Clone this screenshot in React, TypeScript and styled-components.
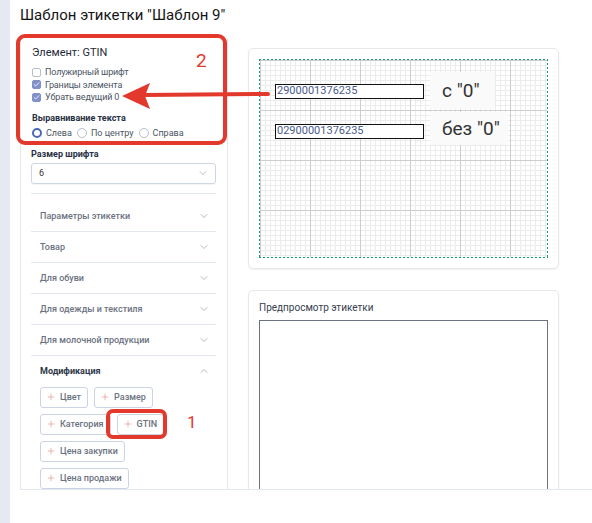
import React from 'react'
import styled, { createGlobalStyle } from 'styled-components'
import { ChevronDown, ChevronUp, Plus, Check } from 'lucide-react'

const GlobalStyle = createGlobalStyle`
  html, body {
    margin: 0;
    padding: 0;
    background: #fff;
  }
  body {
    font-family: Roboto, "Liberation Sans", sans-serif;
    color: #1f2937;
  }
`

const Page = styled.div`
  position: relative;
  display: flex;
  width: 592px;
  height: 523px;
  overflow: hidden;
  background: #fff;
`

const Strip = styled.div`
  width: 10px;
  flex: none;
  background: #e5e9f2;
`

const Main = styled.div`
  flex: 1;
  display: flex;
  flex-direction: column;
  min-width: 0;
`

const Content = styled.div`
  height: 490px;
  overflow: hidden;
  padding-left: 10px;
`

const Title = styled.h1`
  margin: 0;
  padding-top: 5px;
  height: 25px;
  font-size: 15px;
  line-height: 20px;
  font-weight: 400;
  color: #151515;
`

const Columns = styled.div`
  display: grid;
  grid-template-columns: 208px 311px;
  column-gap: 20px;
  margin-top: 8px;
  align-items: start;
`

const Panel = styled.aside`
  border-left: 1px solid #e4e7ec;
  border-right: 1px solid #e4e7ec;
  padding: 0 11px 20px 10px;
  min-height: 460px;
`

const ElementSection = styled.section`
  padding: 8px 0 0 1px;
`

const ElementTitle = styled.div`
  font-size: 11px;
  line-height: 14px;
  color: #1f2937;
`

const CheckList = styled.div`
  margin-top: 6px;
  display: flex;
  flex-direction: column;
`

const CheckRow = styled.label`
  display: flex;
  align-items: center;
  gap: 4px;
  height: 12.5px;
  font-size: 9px;
  letter-spacing: -0.15px;
  color: #4b5563;
`

const Box = styled.span<{ $checked?: boolean }>`
  width: 9px;
  height: 9px;
  box-sizing: border-box;
  border-radius: 2px;
  border: 1px solid ${p => (p.$checked ? '#8190c8' : '#b8bfcc')};
  background: ${p => (p.$checked ? '#8190c8' : '#fff')};
  display: flex;
  align-items: center;
  justify-content: center;
  color: #fff;
`

const SubTitle = styled.div<{ $mt: number }>`
  margin-top: ${p => p.$mt}px;
  font-size: 9px;
  line-height: 12px;
  font-weight: 700;
  color: #273043;
`

const RadioRow = styled.div`
  margin-top: 3px;
  display: flex;
  align-items: center;
  height: 12px;
  gap: 5px;
`

const RadioItem = styled.label`
  display: flex;
  align-items: center;
  gap: 4px;
  font-size: 9px;
  color: #4b5563;
`

const Radio = styled.span<{ $on?: boolean }>`
  width: 10px;
  height: 10px;
  box-sizing: border-box;
  border-radius: 50%;
  border: ${p => (p.$on ? '2.5px solid #4a68b8' : '1px solid #b8bfcc')};
  background: #fff;
`

const Select = styled.div`
  margin-top: 3px;
  height: 21px;
  box-sizing: border-box;
  border: 1px solid #cfd6e3;
  border-radius: 3px;
  display: flex;
  align-items: center;
  justify-content: space-between;
  padding: 0 6px 0 7px;
  font-size: 9px;
  color: #333;
  box-shadow: 0 1px 1px rgba(0, 0, 0, 0.05);
  svg {
    color: #a3aab8;
  }
`

const Divider = styled.hr`
  margin: 9px 0 0;
  border: none;
  border-top: 1px solid #e2e6ee;
`

const Accordion = styled.div`
  margin-top: 7px;
`

const AccItem = styled.div<{ $last?: boolean }>`
  height: 30px;
  display: flex;
  align-items: center;
  justify-content: space-between;
  padding: 0 6px 0 9px;
  border-bottom: ${p => (p.$last ? 'none' : '1px solid #e2e6ee')};
  font-size: 9px;
  color: ${p => (p.$last ? '#2d3648' : '#6b7280')};
  font-weight: ${p => (p.$last ? 700 : 500)};
  svg {
    color: #9aa1ae;
  }
`

const Chips = styled.div`
  margin-top: 1px;
  padding-left: 9px;
  display: flex;
  flex-wrap: wrap;
  gap: 6px;
  width: 130px;
`

const Chip = styled.button`
  height: 21px;
  box-sizing: border-box;
  display: flex;
  align-items: center;
  gap: 4px;
  padding: 0 6px 0 5px;
  border: 1px solid #ccd3e4;
  border-radius: 3px;
  background: #fff;
  font-family: inherit;
  font-size: 9px;
  font-weight: 500;
  color: #6b7280;
  white-space: nowrap;
  svg {
    color: #e58a8a;
  }
`

const Right = styled.div`
  display: flex;
  flex-direction: column;
  padding-top: 10px;
`

const Card = styled.div`
  border: 1px solid #e6e8ec;
  border-radius: 5px;
  padding: 10px;
  background: #fff;
  box-shadow: 0 1px 2px rgba(0, 0, 0, 0.06);
  & + & {
    margin-top: 21px;
  }
`

const CanvasFrame = styled.div`
  padding: 1px;
  background-image: linear-gradient(to right, #10a06c 50%, transparent 50%),
    linear-gradient(to right, #10a06c 50%, transparent 50%),
    linear-gradient(to bottom, #10a06c 50%, transparent 50%),
    linear-gradient(to bottom, #10a06c 50%, transparent 50%);
  background-size: 4px 1px, 4px 1px, 1px 4px, 1px 4px;
  background-position: 0 0, 0 100%, 0 0, 100% 0;
  background-repeat: repeat-x, repeat-x, repeat-y, repeat-y;
`

const Canvas = styled.div`
  position: relative;
  height: 197px;
  background-color: #fff;
  background-image: linear-gradient(to right, #cdcdcd 1px, transparent 1px),
    linear-gradient(to bottom, #cdcdcd 1px, transparent 1px),
    linear-gradient(to right, #ececec 1px, transparent 1px),
    linear-gradient(to bottom, #ececec 1px, transparent 1px);
  background-size: 50px 50px, 50px 50px, 5px 5px, 5px 5px;
  background-position: 0 0;
`

const Field = styled.div<{ $top: number }>`
  position: absolute;
  left: 15px;
  top: ${p => p.$top}px;
  width: 149px;
  height: 15px;
  box-sizing: border-box;
  border: 1.5px solid #111;
  background: #fff;
  padding-left: 1px;
  font-size: 11px;
  line-height: 12px;
  color: #4a5a8c;
`

const Note = styled.div<{ $top: number; $w: number; $h: number }>`
  position: absolute;
  left: 170px;
  top: ${p => p.$top}px;
  width: ${p => p.$w}px;
  height: ${p => p.$h}px;
  box-sizing: border-box;
  background: #fafafa;
  padding-left: 12px;
  display: flex;
  align-items: center;
  font-size: 19px;
  color: #333;
`

const PreviewTitle = styled.div`
  font-size: 10px;
  line-height: 14px;
  color: #374151;
`

const PreviewBox = styled.div`
  margin-top: 5px;
  height: 240px;
  border: 1.5px solid #6b7180;
`

const Footer = styled.footer`
  height: 33px;
  margin-left: 10px;
  border-top: 1px solid #e3e7ee;
  background: #fff;
`

const RedFrame = styled.div<{ $l: number; $t: number; $w: number; $h: number; $r: number }>`
  position: absolute;
  left: ${p => p.$l}px;
  top: ${p => p.$t}px;
  width: ${p => p.$w}px;
  height: ${p => p.$h}px;
  box-sizing: border-box;
  border: 4px solid #e3392d;
  border-radius: ${p => p.$r}px;
  pointer-events: none;
`

const RedNum = styled.span<{ $l: number; $t: number; $s: number }>`
  position: absolute;
  left: ${p => p.$l}px;
  top: ${p => p.$t}px;
  font-size: ${p => p.$s}px;
  line-height: 1;
  color: #e3392d;
`

const ArrowSvg = styled.svg`
  position: absolute;
  left: 118px;
  top: 78px;
`

const checks = [
  { label: 'Полужирный шрифт', on: false },
  { label: 'Границы элемента', on: true },
  { label: 'Убрать ведущий 0', on: true },
]

const sections = [
  'Параметры этикетки',
  'Товар',
  'Для обуви',
  'Для одежды и текстиля',
  'Для молочной продукции',
]

const mods = ['Цвет', 'Размер', 'Категория', 'GTIN', 'Цена закупки', 'Цена продажи']

export default function App() {
  return (
    <>
      <GlobalStyle />
      <Page>
        <Strip />
        <Main>
          <Content>
            <Title>Шаблон этикетки "Шаблон 9"</Title>
            <Columns>
              <Panel>
                <ElementSection>
                  <ElementTitle>Элемент: GTIN</ElementTitle>
                  <CheckList>
                    {checks.map(c => (
                      <CheckRow key={c.label}>
                        <Box $checked={c.on}>{c.on && <Check size={7} strokeWidth={3} />}</Box>
                        {c.label}
                      </CheckRow>
                    ))}
                  </CheckList>
                  <SubTitle $mt={8}>Выравнивание текста</SubTitle>
                  <RadioRow>
                    <RadioItem>
                      <Radio $on />
                      Слева
                    </RadioItem>
                    <RadioItem>
                      <Radio />
                      По центру
                    </RadioItem>
                    <RadioItem>
                      <Radio />
                      Справа
                    </RadioItem>
                  </RadioRow>
                </ElementSection>
                <SubTitle $mt={9}>Размер шрифта</SubTitle>
                <Select>
                  6
                  <ChevronDown size={12} strokeWidth={1.5} />
                </Select>
                <Divider />
                <Accordion>
                  {sections.map(s => (
                    <AccItem key={s}>
                      {s}
                      <ChevronDown size={12} strokeWidth={1.5} />
                    </AccItem>
                  ))}
                  <AccItem $last>
                    Модификация
                    <ChevronUp size={12} strokeWidth={1.5} />
                  </AccItem>
                </Accordion>
                <Chips>
                  {mods.map(m => (
                    <Chip key={m}>
                      <Plus size={10} strokeWidth={1.5} />
                      {m}
                    </Chip>
                  ))}
                </Chips>
              </Panel>
              <Right>
                <Card>
                  <CanvasFrame>
                    <Canvas>
                      <Field $top={24}>2900001376235</Field>
                      <Field $top={64}>02900001376235</Field>
                      <Note $top={12} $w={65} $h={37}>с "0"</Note>
                      <Note $top={52} $w={78} $h={33}>без "0"</Note>
                    </Canvas>
                  </CanvasFrame>
                </Card>
                <Card>
                  <PreviewTitle>Предпросмотр этикетки</PreviewTitle>
                  <PreviewBox />
                </Card>
              </Right>
            </Columns>
          </Content>
          <Footer />
        </Main>

        <RedFrame $l={16} $t={34} $w={211} $h={111} $r={9} />
        <RedNum $l={196} $t={51} $s={19}>2</RedNum>
        <ArrowSvg width="156" height="34" viewBox="0 0 156 34">
          <line x1="26" y1="17" x2="150" y2="16" stroke="#e3392d" strokeWidth="4" strokeLinecap="round" />
          <polygon points="4,18 32,5 27,18 32,31" fill="#e3392d" />
        </ArrowSvg>
        <RedFrame $l={106} $t={409} $w={61} $h={30} $r={7} />
        <RedNum $l={187} $t={414} $s={17}>1</RedNum>
      </Page>
    </>
  )
}
